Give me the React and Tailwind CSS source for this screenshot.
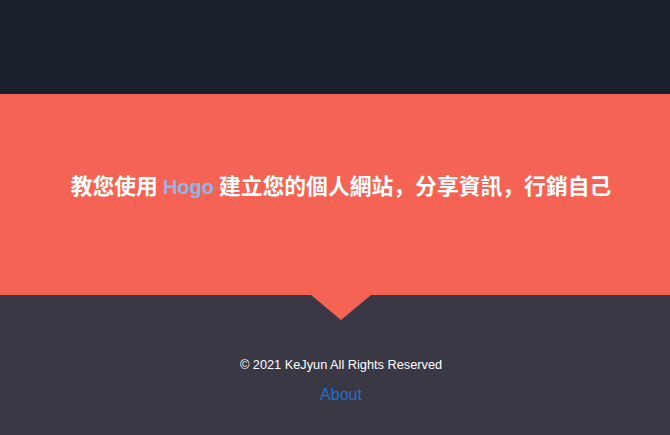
export default function App() {
  return (
    <div className="flex min-h-[435px] w-[682px] flex-col font-['Liberation_Sans','Noto_Sans_CJK_TC',sans-serif]">
      <header className="h-[94px] bg-[#1b212c]" />

      <section className="flex h-[201px] items-center justify-center bg-[#f56354] pb-[19px]">
        <h1 className="font-['Noto_Sans_CJK_SC',sans-serif] text-[21.8px] font-bold leading-none text-white">
          教您使用{' '}
          <span className="font-['Liberation_Sans',sans-serif] text-[20px] text-[#8ab6ea]">Hogo</span>{' '}
          建立您的個人網站，分享資訊，行銷自己
        </h1>
      </section>

      <footer className="relative flex flex-1 flex-col items-center bg-[#3a3844] pt-[60px]">
        <div className="absolute left-1/2 top-0 h-0 w-0 -translate-x-1/2 border-x-[30px] border-t-[25px] border-x-transparent border-t-[#f56354]" />
        <p className="text-[12.75px] text-white">© 2021 KeJyun All Rights Reserved</p>
        <a href="#" className="mt-[9px] text-[16px] text-[#1f6fd0]">
          About
        </a>
      </footer>
    </div>
  )
}
